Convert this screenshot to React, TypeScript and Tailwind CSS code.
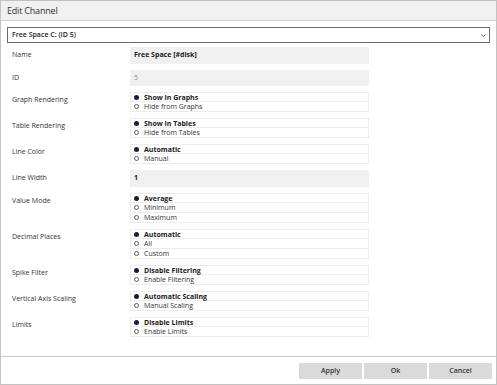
import React from "react";

type Opt = { label: string; selected?: boolean };

function Radio({ options }: { options: Opt[] }) {
  return (
    <div className="w-[239px] flex flex-col">
      {options.map((o, i) => (
        <div
          key={o.label}
          className={
            "h-[10px] flex items-center pl-[3px] border-x border-b border-[#ececec] " +
            (i === 0 ? "border-t" : "")
          }
        >
          {o.selected ? (
            <span className="w-[5px] h-[5px] rounded-full bg-[#1c1c3a] shrink-0" />
          ) : (
            <span className="w-[5px] h-[5px] rounded-full border border-[#606060] shrink-0" />
          )}
          <span
            className={
              "ml-[5px] text-[7px] leading-[9px] " +
              (o.selected ? "font-bold text-[#1a1a1a]" : "text-[#333]")
            }
          >
            {o.label}
          </span>
        </div>
      ))}
    </div>
  );
}

function Row({ label, children }: { label: string; children: React.ReactNode }) {
  return (
    <div className="flex items-start">
      <div className="w-[123px] pl-[5px] text-[7px] leading-[15px] text-[#333]">{label}</div>
      {children}
    </div>
  );
}

function Box({ children, h, className }: { children: React.ReactNode; h: string; className: string }) {
  return (
    <div className={"w-[239px] bg-[#f0f0f0] flex items-center pl-[4px] text-[7px] " + h + " " + className}>
      {children}
    </div>
  );
}

export default function App() {
  return (
    <div
      className="w-[497px] h-[385px] border border-[#c2c2c2] bg-white flex flex-col"
      style={{ fontFamily: '"Open Sans", "Noto Sans", sans-serif' }}
    >
      <div className="h-[20px] bg-[#f0f0f0] border-b border-[#d2d2d2] flex items-center pl-[6px] text-[9px] text-[#333] tracking-[-0.2px]">
        Edit Channel
      </div>
      <div className="flex-1 pt-[6px] px-[6px]">
        <div className="h-[16px] border border-[#6a6a6a] flex items-center justify-between pl-[4px] pr-[3px] text-[7px] font-semibold text-[#222]">
          <span>Free Space C: (ID 5)</span>
          <svg width="5" height="3" viewBox="0 0 5 3">
            <polyline points="0.5,0.5 2.5,2.5 4.5,0.5" fill="none" stroke="#555" strokeWidth="1" />
          </svg>
        </div>
        <div className="mt-[4px] flex flex-col gap-[6px]">
          <Row label="Name">
            <Box h="h-[17px]" className="font-bold text-[#1a1a1a]">Free Space [#disk]</Box>
          </Row>
          <Row label="ID">
            <Box h="h-[16px]" className="text-[#8a8a8a]">5</Box>
          </Row>
          <Row label="Graph Rendering">
            <Radio options={[{ label: "Show in Graphs", selected: true }, { label: "Hide from Graphs" }]} />
          </Row>
          <Row label="Table Rendering">
            <Radio options={[{ label: "Show in Tables", selected: true }, { label: "Hide from Tables" }]} />
          </Row>
          <Row label="Line Color">
            <Radio options={[{ label: "Automatic", selected: true }, { label: "Manual" }]} />
          </Row>
          <Row label="Line Width">
            <Box h="h-[17px]" className="font-bold text-[#1a1a1a]">1</Box>
          </Row>
          <Row label="Value Mode">
            <Radio
              options={[{ label: "Average", selected: true }, { label: "Minimum" }, { label: "Maximum" }]}
            />
          </Row>
          <Row label="Decimal Places">
            <Radio options={[{ label: "Automatic", selected: true }, { label: "All" }, { label: "Custom" }]} />
          </Row>
          <Row label="Spike Filter">
            <Radio options={[{ label: "Disable Filtering", selected: true }, { label: "Enable Filtering" }]} />
          </Row>
          <Row label="Vertical Axis Scaling">
            <Radio options={[{ label: "Automatic Scaling", selected: true }, { label: "Manual Scaling" }]} />
          </Row>
          <Row label="Limits">
            <Radio options={[{ label: "Disable Limits", selected: true }, { label: "Enable Limits" }]} />
          </Row>
        </div>
      </div>
      <div className="h-[28px] border-t border-[#c8c8c8] flex justify-end items-start pt-[6px] pr-[4px] gap-[2px]">
        {["Apply", "Ok", "Cancel"].map((b) => (
          <div
            key={b}
            className="w-[63px] h-[16px] bg-[#dadada] flex items-center justify-center text-[7px] font-semibold text-[#333]"
          >
            {b}
          </div>
        ))}
      </div>
    </div>
  );
}
